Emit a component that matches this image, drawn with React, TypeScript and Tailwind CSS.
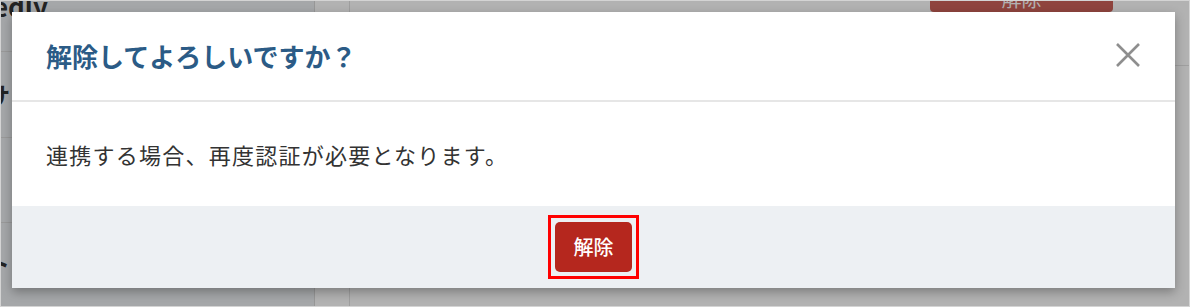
const jp = { fontFamily: '"Noto Sans CJK JP", "Noto Sans", sans-serif' };

/** Page behind the dimmed overlay, only partly visible */
function BackgroundPage() {
  return (
    <div className="flex h-full w-full bg-white">
      <aside className="w-[315px] shrink-0 border-r border-[#d8d8d8] bg-[#eceff3]">
        <div className="flex h-[52px] items-start border-b border-[#dcdcdc]">
          <p className="-ml-[7px] -mt-[14px] text-[26px] font-bold text-[#333]">edly</p>
        </div>
        <div className="flex h-[86px] items-center border-b border-[#dcdcdc]">
          <span className="-ml-[14px] text-[24px] font-bold text-[#333]">サ</span>
        </div>
        <div className="h-[85px] border-b border-[#dcdcdc]" />
        <div className="flex h-[80px] items-center">
          <span className="-ml-[14px] text-[24px] font-bold text-[#333]">ト</span>
        </div>
      </aside>
      <div className="w-[35px] shrink-0 border-r border-[#e2e2e2] bg-white" />
      <main className="flex-1">
        <div className="flex h-[66px] items-start justify-end border-b border-[#e4e4e4] pr-[77px]">
          <button className="-mt-[30px] h-[42px] w-[183px] rounded bg-[#cd6259] pt-[14px] text-[20px] text-white">
            解除
          </button>
        </div>
      </main>
    </div>
  );
}

function CloseIcon() {
  return (
    <svg width="24" height="24" viewBox="0 0 24 24" className="text-[#8e8e8e]">
      <path d="M1 1L23 23M23 1L1 23" stroke="currentColor" strokeWidth="2.6" strokeLinecap="butt" />
    </svg>
  );
}

function ConfirmDialog() {
  return (
    <div className="absolute left-[12px] top-[12px] w-[1163px] bg-white shadow-[0_4px_10px_rgba(0,0,0,0.3)]">
      <header className="flex h-[90px] items-center justify-between border-b-2 border-[#e6e6e6] pl-[34px] pr-[35px]">
        <h2 className="text-[26px] font-bold leading-none text-[#2b5b86]">解除してよろしいですか？</h2>
        <button className="-mt-[2px]">
          <CloseIcon />
        </button>
      </header>
      <div className="flex h-[104px] items-center pl-[34px]">
        <p className="text-[22px] leading-none tracking-[1.25px] text-[#333]">
          連携する場合、再度認証が必要となります。
        </p>
      </div>
      <footer className="flex h-[82px] items-center justify-center bg-[#edf0f3]">
        <div className="border-[3px] border-[#ff0000] p-[4px]">
          <button className="flex h-[50px] w-[77px] items-center justify-center rounded-[5px] bg-[#b5271e] text-[20px] font-medium text-white">
            解除
          </button>
        </div>
      </footer>
    </div>
  );
}

export default function App() {
  return (
    <div className="relative h-[307px] w-[1190px] overflow-hidden" style={jp}>
      <BackgroundPage />
      <div className="absolute inset-0 border border-[#d4d4d4] bg-black/30" />
      <ConfirmDialog />
    </div>
  );
}
